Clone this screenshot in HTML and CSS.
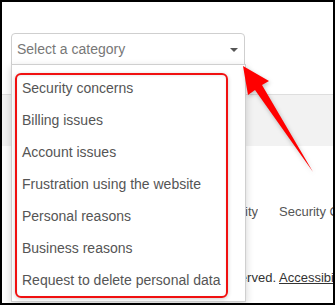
FILE: index.html
```html
<!DOCTYPE html>
<html>
<head>
<meta charset="utf-8">
<link rel="stylesheet" href="styles.css">
</head>
<body>
<div class="frame">
  <div class="field">
    <div class="select">
      <span class="placeholder">Select a category</span>
      <span class="caret"></span>
    </div>
    <div class="dropdown">
      <ul class="options">
        <li>Security concerns</li>
        <li>Billing issues</li>
        <li>Account issues</li>
        <li>Frustration using the website</li>
        <li>Personal reasons</li>
        <li>Business reasons</li>
        <li>Request to delete personal data</li>
      </ul>
      <div class="highlight"></div>
    </div>
  </div>
  <div class="band"></div>
  <div class="links">
    <span class="clip links-left"><span>Accessibility</span></span>
    <span class="links-right">Security Center</span>
  </div>
  <div class="footer">
    <span class="clip footer-left"><span>All rights reserved.</span></span>
    <a class="footer-link">Accessibility</a>
  </div>
  <svg class="arrow" viewBox="2 2 331 301" width="331" height="301">
    <polygon points="243,66 269,81 262,85 313,172 255,90 248,95" fill="#ff0000"/>
  </svg>
</div>
</body>
</html>
```

FILE: styles.css
```css
* { box-sizing: border-box; }
html, body { margin: 0; padding: 0; background: #fff; }
body { font-family: "Liberation Sans", Arial, sans-serif; }

.frame {
  position: relative;
  width: 335px;
  height: 305px;
  border: 2px solid #000;
  overflow: hidden;
  background: #fff;
}

.field {
  position: relative;
  width: 234px;
  margin: 31px 0 0 9px;
  z-index: 2;
}

.select {
  height: 32px;
  border: 1px solid #cfcfcf;
  border-radius: 4px 4px 0 0;
  display: flex;
  align-items: center;
  justify-content: space-between;
  padding: 0 6px 0 5px;
  background: #fff;
}
.placeholder { font-size: 14px; color: #777; }
.caret {
  width: 0; height: 0;
  border-left: 4px solid transparent;
  border-right: 4px solid transparent;
  border-top: 4px solid #555;
  margin-top: 2px;
}

.dropdown {
  position: absolute;
  top: 31px;
  left: 0;
  width: 235px;
  height: 238px;
  background: #fff;
  border: 1px solid #cfcfcf;
  box-shadow: 0 3px 8px rgba(0,0,0,0.18);
}
.options {
  list-style: none;
  margin: 0;
  padding: 7px 0 0 0;
}
.options li {
  height: 32px;
  line-height: 32px;
  padding-left: 10px;
  font-size: 14px;
  color: #555;
  white-space: nowrap;
}
.highlight {
  position: absolute;
  left: 3px;
  top: 8px;
  width: 213px;
  height: 225px;
  border: 2px solid #f01010;
  border-radius: 6px;
  box-shadow: 0 1px 4px rgba(0,0,0,0.2), inset 0 1px 3px rgba(0,0,0,0.08);
}

.band {
  margin-top: 29px;
  height: 52px;
  background: #f2f2f2;
  border-top: 1px solid #dedede;
}

.clip {
  display: flex;
  justify-content: flex-end;
  overflow: hidden;
  white-space: nowrap;
}

.links {
  display: flex;
  gap: 21px;
  margin-top: 58px;
  padding-left: 244px;
  font-size: 13px;
  color: #555;
  white-space: nowrap;
  line-height: 16px;
}
.links-left { flex: 0 0 12px; }

.footer {
  display: flex;
  gap: 3px;
  margin-top: 50px;
  padding-left: 244px;
  font-size: 13px;
  color: #333;
  white-space: nowrap;
  line-height: 16px;
}
.footer-left { flex: 0 0 30px; }
.footer-link { color: #333; text-decoration: underline; }

.arrow {
  position: absolute;
  left: 0;
  top: 0;
  z-index: 3;
  filter: drop-shadow(1px 2px 2px rgba(0,0,0,0.25));
}
```
